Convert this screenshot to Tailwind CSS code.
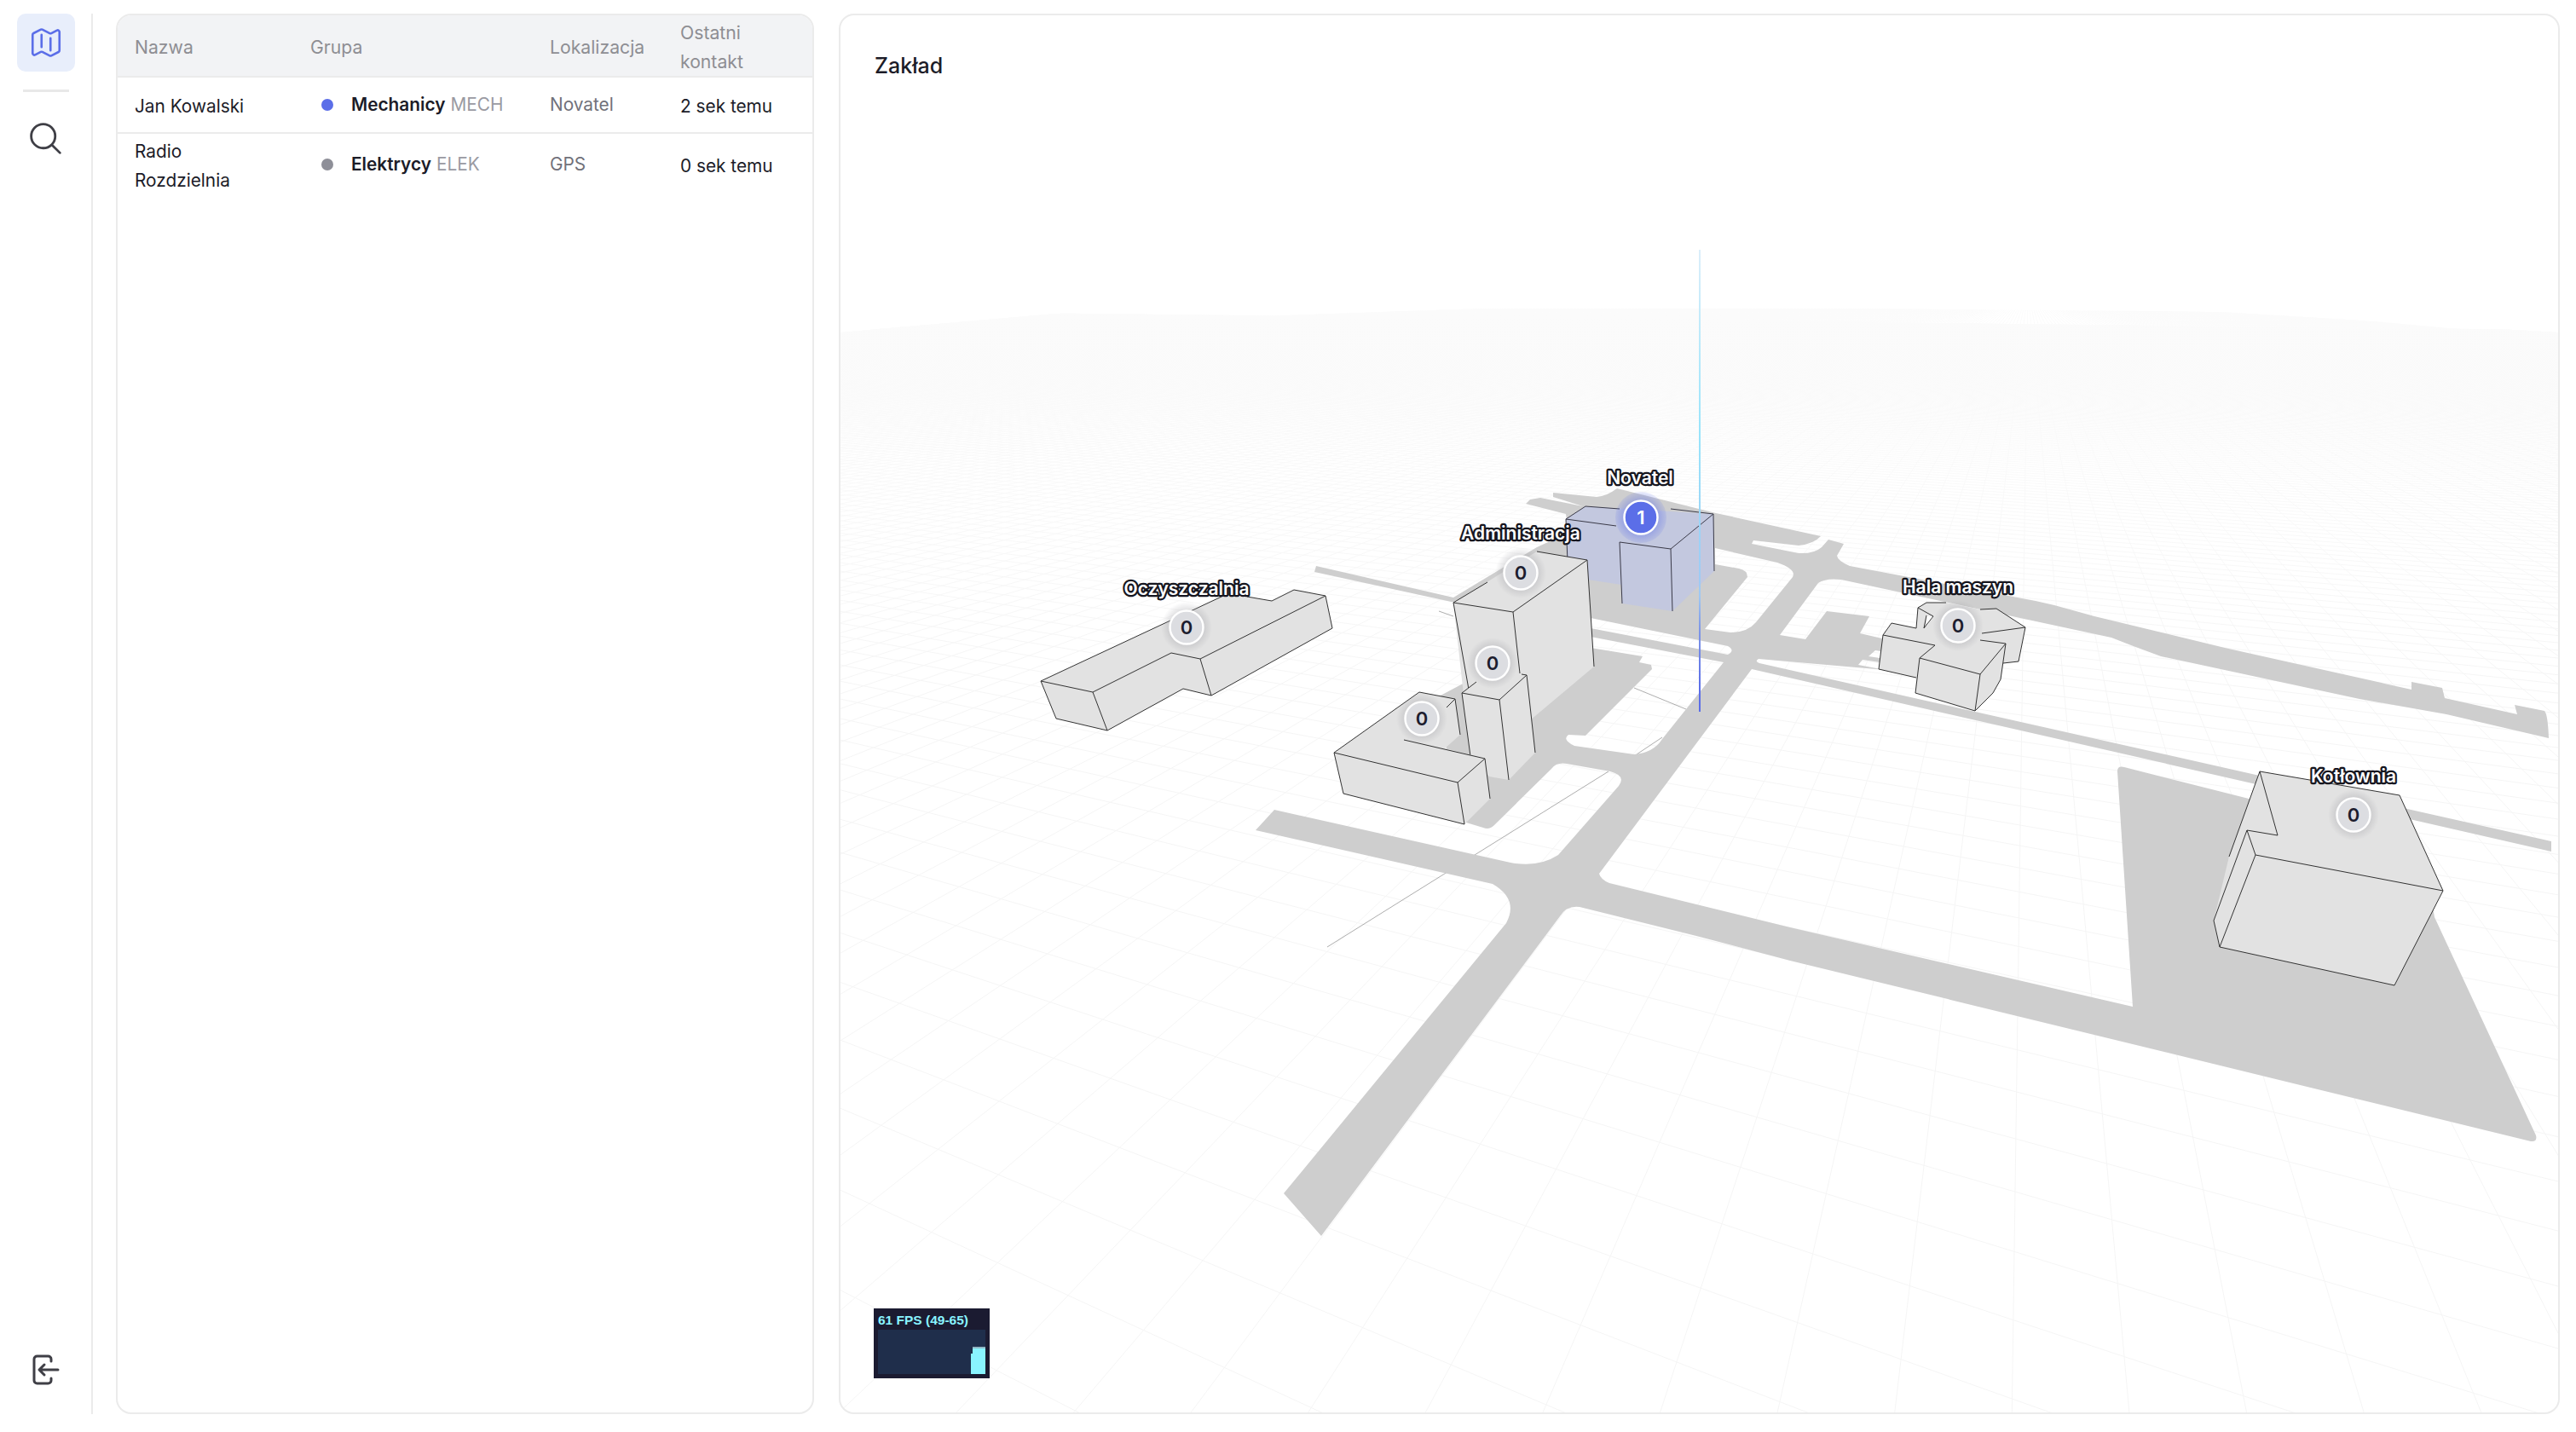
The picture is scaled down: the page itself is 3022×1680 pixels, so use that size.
<!DOCTYPE html>
<html lang="pl">
<head>
    <meta charset="UTF-8">
    <title>Zakład</title>
    <script src="https://cdn.jsdelivr.net/npm/@tailwindcss/browser@4"></script>
</head>
<body class="bg-white font-[Inter,sans-serif] text-[#1c1c28]">
    <div class="flex h-[1680px] pt-4 pb-[21px] pr-[19px]">

        <!-- sidebar -->
        <nav class="w-[109px] shrink-0 border-r-2 border-[#ebebeb] flex flex-col items-center pb-[34px]">
            <div class="w-[68px] h-[68px] rounded-[10px] bg-[#e8eefb] flex items-center justify-center text-[#5b6ee8]">
                <svg class="w-[42px] h-[42px]" viewBox="0 0 24 24" fill="none" stroke="currentColor" stroke-width="1.5" stroke-linecap="round" stroke-linejoin="round"><path d="M9 6.75V15m6-6v8.25m.503 3.498 4.875-2.437c.381-.19.622-.58.622-1.006V4.82c0-.836-.88-1.38-1.628-1.006l-3.869 1.934c-.317.159-.69.159-1.006 0L9.503 3.252a1.125 1.125 0 0 0-1.006 0L3.622 5.689C3.24 5.88 3 6.27 3 6.695V19.18c0 .836.88 1.38 1.628 1.006l3.869-1.934c.317-.159.69-.159 1.006 0l4.994 2.497c.317.158.69.158 1.006 0Z"/></svg>
            </div>
            <div class="w-[54px] h-[3px] bg-[#e8e8e8] mt-[21px]"></div>
            <svg class="w-[45px] h-[45px] mt-[32px] text-[#3f3f46]" viewBox="0 0 24 24" fill="none" stroke="currentColor" stroke-width="1.5" stroke-linecap="round" stroke-linejoin="round"><path d="m21 21-5.197-5.197m0 0A7.5 7.5 0 1 0 5.196 5.196a7.5 7.5 0 0 0 10.607 10.607Z"/></svg>
            <svg class="w-[34px] h-[36px] mt-auto text-[#3f3f46]" viewBox="0 0 34 36" fill="none" stroke="currentColor" stroke-width="3" stroke-linecap="round" stroke-linejoin="round"><path d="M23 8V5.5A3.5 3.5 0 0 0 19.500 2H6.500A3.500 3.500 0 0 0 3 5.500V30.500A3.500 3.500 0 0 0 6.500 34H19.500A3.500 3.500 0 0 0 23 30.500V28M31 18H10M15 12L9 18L15 24"/></svg>
        </nav>

        <!-- table -->
        <section class="w-[819px] shrink-0 ml-[27px] border-2 border-[#ebebeb] rounded-[18px] overflow-hidden">
            <table class="w-full table-fixed text-[20.800px] leading-[34px] text-left">
                <colgroup>
                    <col class="w-[206px]"><col class="w-[281px]"><col class="w-[153px]"><col>
                </colgroup>
                <thead class="bg-[#f2f3f5] text-[#8e8e93] text-[21.200px]">
                    <tr class="h-[70px] border-b-2 border-[#ebebeb]">
                        <th class="font-normal pl-5 pr-5 pt-[3px]">Nazwa</th>
                        <th class="font-normal pl-5 pt-[3px]">Grupa</th>
                        <th class="font-normal pl-5 pt-[3px]">Lokalizacja</th>
                        <th class="font-normal pl-5 pr-5 pt-[3px]">Ostatni kontakt</th>
                    </tr>
                </thead>
                <tbody>
                    <tr class="h-[66px] border-b-2 border-[#ebebeb]">
                        <td class="pl-5 pr-[22px] pt-1">Jan Kowalski</td>
                        <td class="pl-5">
                            <div class="flex items-center">
                                <span class="w-[14px] h-[14px] rounded-full bg-[#5b6ee8] ml-[13px] mr-[21px]"></span>
                                <span class="font-semibold">Mechanicy</span>
                                <span class="text-[#9a9aa2] ml-[6px]">MECH</span>
                            </div>
                        </td>
                        <td class="pl-5 text-[#71717a]">Novatel</td>
                        <td class="pl-5 pt-1">2 sek temu</td>
                    </tr>
                    <tr class="h-[70px]">
                        <td class="pl-5 pr-[22px] pt-1">Radio Rozdzielnia</td>
                        <td class="pl-5">
                            <div class="flex items-center">
                                <span class="w-[14px] h-[14px] rounded-full bg-[#8e8f98] ml-[13px] mr-[21px]"></span>
                                <span class="font-semibold">Elektrycy</span>
                                <span class="text-[#9a9aa2] ml-[6px]">ELEK</span>
                            </div>
                        </td>
                        <td class="pl-5 text-[#71717a]">GPS</td>
                        <td class="pl-5 pt-1">0 sek temu</td>
                    </tr>
                </tbody>
            </table>
        </section>

        <!-- map -->
        <main class="relative flex-1 ml-[29px] border-2 border-[#ebebeb] rounded-[18px] overflow-hidden">
            <svg class="absolute inset-0 w-full h-full" viewBox="986 18 2015 1639" preserveAspectRatio="none">
                <defs>
                    <clipPath id="ground"><path d="M985 390L1262 366Q1994 358 2605 366L3003 390V1658H985Z"/></clipPath>
                    <radialGradient id="halo">
                        <stop offset="0.55" stop-color="#9a9aa0" stop-opacity="0.4"/>
                        <stop offset="1" stop-color="#9a9aa0" stop-opacity="0"/>
                    </radialGradient>
                    <radialGradient id="haloBlue">
                        <stop offset="0.6" stop-color="#5b6ee8" stop-opacity="0.45"/>
                        <stop offset="1" stop-color="#5b6ee8" stop-opacity="0.12"/>
                    </radialGradient>
                    <linearGradient id="beam" gradientUnits="userSpaceOnUse" x1="0" y1="293" x2="0" y2="835">
                        <stop offset="0" stop-color="#dbeefa"/>
                        <stop offset="0.4" stop-color="#98e4fb"/>
                        <stop offset="0.75" stop-color="#9fc8f3"/>
                        <stop offset="0.82" stop-color="#7f97e6"/>
                        <stop offset="0.95" stop-color="#5b6ee8"/>
                    </linearGradient>
                    <linearGradient id="gridFade" gradientUnits="userSpaceOnUse" x1="0" y1="366" x2="0" y2="800">
                        <stop offset="0" stop-color="#fbfbfb"/>
                        <stop offset="0.5" stop-color="#f9f9f9"/>
                        <stop offset="1" stop-color="#f5f5f5"/>
                    </linearGradient>
                </defs>

                <path id="grid" clip-path="url(#ground)" fill="none" stroke="url(#gridFade)" stroke-width="1"/>

                <!-- thin lines on the ground -->
                <path d="M1917 807L1978 832M1688 717L1705 723M1887 905L1557 1111M1920 885L1950 865" fill="none" stroke="#8a8a8a" stroke-opacity="0.7" stroke-width="1"/>

                <!-- roads and yards -->
                <path fill="#cecece" fill-rule="evenodd" d="M1495 950L1772 1012Q1805 1018 1828 1003L1899 922Q1908 910 1889 905L1838 896Q1826 894 1820 902L1753 968Q1747 974 1740 971L1720 965L1697 880L1688 817L1720 800L1707 707L1542 671L1544 664L1705 701L1803 642L1840 625L1837 603L1790 591L1795 586L1807 584L1857 594L1822 583L1822 578L1873 583Q1885 582 1897 573L2013 602L2136 629Q2128 638 2110 640L2057 634L2055 638L2110 649Q2128 650 2137 642L2145 633L2163 638L2155 652Q2156 658 2170 664L2388 705L2410 710L2457 723L2610 760L2829 809L2829 800L2865 807L2868 819L2953 838L2950 827L2985 834Q2989 838 2990 866L2870 838L2768 820L2535 770L2500 757L2477 748L2160 680Q2142 678 2133 684L2088 745L2118 750L2143 717L2193 723L2182 743L2212 750L2212 786L2063 773Q2058 776 2064 778L2993 987L2993 999L2055 785L1876 1025Q1878 1032 1888 1036L2100 1088L2502 1181L2484 905Q2484 898 2492 900L2650 940L2850 1040L2856 1076L2975 1332Q2977 1340 2969 1339L2100 1127L1990 1098L1853 1064Q1838 1062 1830 1075L1550 1450L1506 1400L1767 1083Q1782 1055 1751 1037L1473 974Z
                    M1866 725L2027 758Q2036 763 2027 768L1866 737Z
                    M1866 747L2022 777L1950 867Q1940 883 1917 885L1847 875Q1832 868 1840 862L1860 863L1938 785L1937 780L1923 777L1927 770L1866 760Z
                    M2012 643L2085 660Q2108 668 2103 677L2060 730Q2050 742 2030 742L2000 738L2050 677Q2050 669 2040 667L2012 662Z
                    M2192 770L2200 763L2212 765L2212 773Z
                    M2180 780L2185 774L2212 778L2212 786Z"/>

                <!-- Kotlownia -->
                <path fill="#e2e2e2" d="M2651 905L2815 933L2866 1045L2809 1156L2604 1111L2597 1080L2615 1005Z"/>
                <path fill="none" stroke="#333" stroke-width="1" d="M2615 1005L2651 905L2815 933L2866 1045L2809 1156M2651 905L2672 980L2636 974L2646 1003L2866 1045M2636 974L2597 1080L2604 1111M2646 1003L2604 1111L2809 1156"/>

                <!-- Oczyszczalnia -->
                <path fill="#e2e2e2" d="M1221 799L1433 700L1463 700L1492 705L1518 692L1555 699L1563 737L1421 816L1388 808L1299 857L1239 843Z"/>
                <path fill="none" stroke="#333" stroke-width="1" d="M1221 799L1282 812L1374 766L1408 773L1555 699L1518 692L1492 705L1463 700M1433 700L1221 799L1239 843L1299 857L1282 812M1299 857L1388 808M1408 773L1421 816L1563 737L1555 699M1421 816L1388 808"/>

                <!-- Novatel, selected -->
                <path fill="#c3c8df" d="M1837 609L1860 594L2010 603L2011 670L1962 717L1903 708L1902 686L1863 680L1839 660Z"/>
                <path fill="none" stroke="#3a3a48" stroke-width="1" d="M1839 660L1837 609L1896 617M1837 609L1860 594L1900 597M1960 597L2010 603L1960 644L1900 636L1903 708M1960 644L1962 717M2010 603L2011 670"/>

                <!-- Administracja tower -->
                <path fill="#e2e2e2" d="M1705 707L1803 647L1862 657L1870 782L1795 845L1770 900L1725 887Z"/>
                <path fill="none" stroke="#333" stroke-width="1" d="M1725 820L1705 707L1775 718L1862 657L1803 647M1705 707L1745 683M1775 718L1783 790M1862 657L1870 782"/>

                <!-- middle block -->
                <path fill="#e2e2e2" d="M1715 813L1750 785L1791 792L1801 883L1770 915L1747 911L1725 887Z"/>
                <path fill="none" stroke="#333" stroke-width="1" d="M1725 887L1715 813L1759 821L1791 792L1801 883M1759 821L1770 915M1715 813L1732 800M1785 791L1791 792"/>

                <!-- L shaped block -->
                <path fill="#e2e2e2" d="M1565 883L1665 812L1707 820L1713 862L1695 878L1742 890L1748 937L1718 967L1576 931Z"/>
                <path fill="none" stroke="#333" stroke-width="1" d="M1565 883L1665 812L1707 820L1713 862M1707 820L1697 830M1647 868L1742 890L1710 918L1565 883L1576 931L1718 967L1710 918M1742 890L1748 937"/>

                <!-- Hala maszyn -->
                <path fill="#e2e2e2" d="M2250 713L2260 707L2283 707L2323 715L2342 714L2376 736L2368 776L2350 778L2347 797L2338 813L2317 834L2247 813L2248 795L2204 785L2209 745L2219 731L2248 737Z"/>
                <path fill="#fff" d="M2260 722L2268 724L2260 735Z"/>
                <path fill="none" stroke="#333" stroke-width="1" d="M2248 737L2250 713L2260 707L2283 707M2250 713L2268 723L2257 737L2260 722M2323 715L2342 714L2376 736L2325 743M2376 736L2368 776L2350 778M2209 745L2219 731L2248 737M2209 745L2270 757L2252 772L2323 791L2353 755L2323 751M2209 745L2204 785L2248 795M2252 772L2247 813L2317 834L2323 791M2353 755L2347 797L2338 813L2317 834"/>

                <!-- beam -->
                <path d="M1994 293V835" stroke="url(#beam)" stroke-width="2"/>

                <!-- markers -->
                <g font-size="22" font-weight="600" text-anchor="middle" fill="#1c1c2e">
                    <circle cx="1784" cy="672" r="30" fill="url(#halo)"/>
                    <circle cx="1784" cy="672" r="19.500" fill="#dcdde1" stroke="#fff" stroke-width="2.500"/>
                    <text x="1784" y="680">0</text>

                    <circle cx="1751" cy="778" r="30" fill="url(#halo)"/>
                    <circle cx="1751" cy="778" r="19.500" fill="#dcdde1" stroke="#fff" stroke-width="2.500"/>
                    <text x="1751" y="786">0</text>

                    <circle cx="1668" cy="843" r="30" fill="url(#halo)"/>
                    <circle cx="1668" cy="843" r="19.500" fill="#dcdde1" stroke="#fff" stroke-width="2.500"/>
                    <text x="1668" y="851">0</text>

                    <circle cx="1392" cy="736" r="30" fill="url(#halo)"/>
                    <circle cx="1392" cy="736" r="19.500" fill="#dcdde1" stroke="#fff" stroke-width="2.500"/>
                    <text x="1392" y="744">0</text>

                    <circle cx="2297" cy="734" r="30" fill="url(#halo)"/>
                    <circle cx="2297" cy="734" r="19.500" fill="#dcdde1" stroke="#fff" stroke-width="2.500"/>
                    <text x="2297" y="742">0</text>

                    <circle cx="2761" cy="956" r="30" fill="url(#halo)"/>
                    <circle cx="2761" cy="956" r="19.500" fill="#dcdde1" stroke="#fff" stroke-width="2.500"/>
                    <text x="2761" y="964">0</text>

                    <circle cx="1925" cy="607" r="30" fill="url(#haloBlue)"/>
                    <circle cx="1925" cy="607" r="19.500" fill="#5b6ee8" stroke="#fff" stroke-width="2.500"/>
                    <text x="1925" y="615" fill="#fff">1</text>
                </g>

                <!-- labels -->
                <g font-size="21" font-weight="600" text-anchor="middle" fill="#fff" stroke="#16161f" stroke-width="4.500" stroke-linejoin="round" class="[paint-order:stroke]">
                    <text x="1924" y="568">Novatel</text>
                    <text x="1784" y="633">Administracja</text>
                    <text x="1392" y="698">Oczyszczalnia</text>
                    <text x="2297" y="696">Hala maszyn</text>
                    <text x="2761" y="918">Kotłownia</text>
                </g>
            </svg>

            <h2 class="absolute left-[40px] top-[42px] text-[25px] leading-[34px] font-medium">Zakład</h2>

            <!-- fps counter -->
            <div class="absolute left-[39px] bottom-[40px] w-[136px] h-[82px] bg-[#1b1b31] pt-[5px] px-[5px] flex flex-col">
                <p class="font-['Liberation_Sans',sans-serif] font-bold text-[15.500px] leading-[18px] text-[#89f4ff] whitespace-nowrap">61 FPS (49-65)</p>
                <div class="relative mt-[2px] h-[52px] bg-[#1f2e4b] overflow-hidden flex items-end justify-end">
                    <div class="w-[2px] h-[24px] bg-[#89f4ff]"></div>
                    <div class="w-[15px] h-[32px] bg-[#89f4ff] border-t-2 border-[#8fb7c4]"></div>
                </div>
            </div>
        </main>
    </div>

    <script>
        // perspective ground grid, two families of parallel lines
        const bottom = 1680;
        let d = '';
        for (let x = -36000; x < 17000; x += 140) {
            d += `M2379 340L${x} ${bottom}`;
        }
        for (let x = -1300; x < 120000; x += 290) {
            d += `M-1300 340L${x} ${bottom}`;
        }
        document.getElementById('grid').setAttribute('d', d);
    </script>
</body>
</html>
